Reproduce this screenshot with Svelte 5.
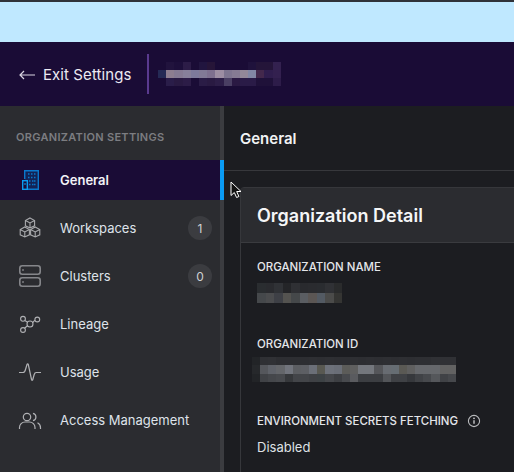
<script>
  const headerBlur = [
    ['#1a0c36','#21133d','#1d0f3a','#2c1c47','#1a0c36','#21153f','#261538','#1a0c36','#1a0c36','#1a0c36','#1a0c36','#1f123c','#241539','#241539','#33214f'],
    ['#252a55','#8d7e90','#857a93','#87809a','#7e7a9c','#827a96','#7e708f','#9d8ea3','#7e7590','#857b93','#938899','#8287a5','#43284c','#2f1d4d','#33204f'],
    ['#1a0c36','#2a1d49','#291a42','#2c1c47','#1a0c36','#2a1c46','#291a42','#2d1e48','#4a3f63','#2a1943','#2a1b47','#2a1b47','#1f1139','#1f1139','#2d1c49']
  ];
  const nameBlur = [
    ['#2a2d30','#2a2b2f','#303236','#242528','#2f3034','#292a2e','#2a2b2f','#2a2c30','#303135','#2a2b2c'],
    ['#45484b','#4b4c4e','#3e4046','#545350','#45484a','#5a5d62','#5b5654','#535a63','#4b4b4a','#353533']
  ];
  const idBlur = [
    ['#222427','#2f3034','#303135','#2d2e32','#2d2e32','#2d2e32','#2d2e32','#2e2f33','#2d2e32','#2e2f33','#2d2e32','#2d2e32','#2e2f33','#2d2e32','#2e2f33','#2d2e32','#2e2f33','#2d2e32','#2e2f33','#2d2e32','#2e2f33','#2e2f33','#303135','#303135','#303135'],
    ['#26282b','#55575c','#5f6269','#64666a','#71747c','#5c5e62','#5d5f64','#6b6f78','#585851','#6d717a','#6a6e77','#5c5c59','#5f5f5f','#74777d','#74777d','#55565a','#686c72','#666d73','#5a5954','#5f5f5f','#66686c','#66686c','#66686c','#626262','#626262'],
    ['#222427','#404246','#45474b','#484a4e','#36383b','#434549','#434549','#3f4145','#3d4245','#45474b','#3d3f43','#484a4e','#5a5b5f','#3c3e42','#3c3e42','#3c3e42','#535559','#3f4145','#3f4145','#36383c','#404246','#47494d','#55575b','#404246','#46484c']
  ];
  const items = [
    { name: 'General', active: true, icon: 'building' },
    { name: 'Workspaces', badge: 1, icon: 'cubes' },
    { name: 'Clusters', badge: 0, icon: 'servers' },
    { name: 'Lineage', icon: 'lineage' },
    { name: 'Usage', icon: 'pulse' },
    { name: 'Access Management', icon: 'users' }
  ];
</script>

{#snippet blur(rows, cls)}
  <div class="blur {cls}">
    {#each rows as row}
      <div class="blur-row">
        {#each row as c}<span style:background={c}></span>{/each}
      </div>
    {/each}
  </div>
{/snippet}

{#snippet cube(x, y)}
  <path d="M{x} {y - 5}l4.6 2.6v5.2L{x} {y + 5}l-4.6-2.2v-5.2zM{x - 4.6} {y - 2.4}L{x} {y}l4.6-2.4M{x} {y}v5" />
{/snippet}

<div class="page">
  <div class="banner"></div>
  <header class="topbar">
    <a class="exit" href="#exit">
      <svg class="arrow" viewBox="0 0 16 10" width="16" height="10" aria-hidden="true">
        <path d="M16 5H1M5 1L1 5l4 4" fill="none" stroke="#d9d6e2" stroke-width="1.2" />
      </svg>
      Exit Settings
    </a>
    <div class="divider"></div>
    {@render blur(headerBlur, 'blur-header')}
  </header>

  <div class="body">
    <aside class="sidebar">
      <div class="side-title">ORGANIZATION SETTINGS</div>
      <nav class="nav">
        {#each items as item}
          <div class="item" class:active={item.active}>
            <svg class="icon" viewBox="0 0 24 24" width="24" height="24" aria-hidden="true">
              {#if item.icon === 'building'}
                <path d="M6.7 11V2.7h13.6v18.6H9" fill="#0a4f93" fill-opacity="0.35" stroke="#0a78cc" stroke-width="1.4" />
                <rect x="4.7" y="12.7" width="4.6" height="8.6" fill="#1a0c36" stroke="#0a9cf0" stroke-width="1.4" />
                <path d="M10 6h1.5M13 6h1.5M16 6h1.5M10 9.500h1.5M13 9.500h1.500M16 9.500h1.500M11 13h1.500M14 13h1.500M16 13h1.500M11 16.500h1.500M14 16.500h1.500M16 16.500h1.500" stroke="#0a78cc" stroke-width="1.300" />
                <path d="M6.300 16h1.400" stroke="#0a9cf0" stroke-width="1.300" />
              {:else if item.icon === 'cubes'}
                <g fill="none" stroke="#a9aaad" stroke-width="1.100">
                  {@render cube(12, 7)}
                  {@render cube(6.800, 16)}
                  {@render cube(17.200, 16)}
                </g>
              {:else if item.icon === 'servers'}
                <g fill="none" stroke="#85868a" stroke-width="1.600">
                  <rect x="1.800" y="1.800" width="20.400" height="8.400" rx="2.500" />
                  <rect x="1.800" y="13.800" width="20.400" height="8.400" rx="2.500" />
                </g>
                <rect x="4" y="5" width="2" height="2" fill="#66676b" />
                <rect x="4" y="17" width="2" height="2" fill="#66676b" />
              {:else if item.icon === 'lineage'}
                <g fill="none" stroke="#b0b1b4" stroke-width="1.100">
                  <circle cx="5" cy="6.800" r="2.400" />
                  <circle cx="19.300" cy="7.500" r="2.400" />
                  <circle cx="5" cy="18" r="2.400" />
                  <circle cx="12" cy="12" r="3" />
                  <path d="M6.800 8.500l2.900 1.700M17 8.200l-2.300 2.300M6.500 16.200l3-2.400" />
                </g>
              {:else if item.icon === 'pulse'}
                <path d="M1 12.500h4c1.500 0 2-1 2.500-3L9 4.500c.3-1 1-1 1.300 0l3.200 15c.3 1 1 1 1.300 0l1.400-5c.4-1.500 1-2 2-2H23" fill="none" stroke="#b0b1b4" stroke-width="1.200" />
              {:else}
                <g fill="none" stroke="#b0b1b4" stroke-width="1.200">
                  <circle cx="9" cy="9" r="3.700" />
                  <path d="M1.500 21v-1.500a5.500 5.500 0 0 1 5.500-5.500h4.500a5.500 5.500 0 0 1 5.500 5.500V21" />
                  <path d="M15 5.300a3.800 3.800 0 0 1 0 7.400M19.500 14.800a5.500 5.500 0 0 1 3 5V21" />
                </g>
              {/if}
            </svg>
            <span class="label">{item.name}</span>
            {#if item.badge !== undefined}<span class="badge">{item.badge}</span>{/if}
          </div>
        {/each}
      </nav>
    </aside>

    <div class="scrollbar"><div class="thumb"></div></div>

    <main class="main">
      <div class="main-head">General</div>
      <section class="card">
        <h2 class="card-head">Organization Detail</h2>
        <div class="fields">
          <div class="field">
            <div class="field-label">ORGANIZATION NAME</div>
            {@render blur(nameBlur, 'blur-name')}
          </div>
          <div class="field">
            <div class="field-label">ORGANIZATION ID</div>
            {@render blur(idBlur, 'blur-id')}
          </div>
          <div class="field">
            <div class="field-label">
              ENVIRONMENT SECRETS FETCHING
              <svg class="info" viewBox="0 0 14 14" width="14" height="14" aria-hidden="true">
                <circle cx="7" cy="7" r="5.600" fill="none" stroke="#b9babd" stroke-width="1.100" />
                <path d="M7 6.300v3.500" stroke="#d5d6d8" stroke-width="1.300" />
                <circle cx="7" cy="4.400" r="0.800" fill="#d5d6d8" />
              </svg>
            </div>
            <div class="field-value">Disabled</div>
          </div>
        </div>
      </section>
    </main>
  </div>

  <svg class="cursor" viewBox="0 0 12 18" width="12" height="18" aria-hidden="true">
    <path d="M1 1v13.500l3.300-3 2.300 5 2.300-1-2.200-5h4.300z" fill="#111" stroke="#fff" stroke-width="1" />
  </svg>
</div>

<style>
  :global(body) {
    margin: 0;
    background: #1c1d21;
  }
  .page {
    position: relative;
    width: 514px;
    height: 472px;
    overflow: hidden;
    font-family: Inter, "Liberation Sans", sans-serif;
    color: #f1f2f4;
    display: flex;
    flex-direction: column;
  }
  .banner {
    height: 40px;
    flex: none;
    background: #bfe8ff;
    border-top: 2px solid #2f3239;
  }
  .topbar {
    height: 64px;
    flex: none;
    background: #1a0c36;
    display: flex;
    align-items: center;
    padding-left: 19px;
    box-sizing: border-box;
  }
  .exit {
    display: flex;
    align-items: center;
    gap: 8px;
    color: #eceaf2;
    font-size: 15px;
    letter-spacing: 0.08px;
    text-decoration: none;
    width: 128px;
    margin-top: 1px;
  }
  .arrow {
    flex: none;
  }
  .divider {
    width: 2px;
    height: 40px;
    background: #5a3a8f;
    margin-right: 9px;
  }
  .blur-row {
    display: flex;
  }
  .blur-header span {
    width: 8.200px;
    height: 8px;
  }
  .blur-name span {
    width: 8.500px;
    height: 10px;
  }
  .blur-id span {
    width: 8.160px;
    height: 8.330px;
  }
  .blur-name {
    margin-top: 8px;
  }
  .blur-id {
    margin-top: 5px;
    margin-left: -5px;
  }
  .body {
    flex: 1;
    display: flex;
    min-height: 0;
  }
  .sidebar {
    width: 220px;
    flex: none;
    background: #2b2c30;
  }
  .side-title {
    height: 54px;
    box-sizing: border-box;
    padding: 8px 16px 0;
    display: flex;
    align-items: center;
    font-size: 11px;
    font-weight: 600;
    letter-spacing: 0.3px;
    color: #7c7d81;
  }
  .nav {
    display: flex;
    flex-direction: column;
    gap: 8px;
  }
  .item {
    height: 40px;
    display: flex;
    align-items: center;
    padding: 0 8px 0 18px;
    gap: 18px;
    font-size: 13px;
    color: #dfe3ea;
  }
  .item.active {
    background: #1a0c36;
    color: #f3f3f7;
    font-weight: 600;
  }
  .icon {
    flex: none;
  }
  .label {
    flex: 1;
  }
  .badge {
    width: 24px;
    height: 24px;
    border-radius: 50%;
    background: #3b3c40;
    color: #cfd1d4;
    font-size: 12px;
    display: flex;
    align-items: center;
    justify-content: center;
  }
  .scrollbar {
    width: 4px;
    flex: none;
    background: #3b3c40;
  }
  .thumb {
    height: 40px;
    margin-top: 54px;
    background: #0a9cf5;
  }
  .main {
    flex: 1;
    min-width: 0;
    background: #1c1d21;
  }
  .main-head {
    height: 65px;
    box-sizing: border-box;
    border-bottom: 1px solid #37383c;
    padding: 0 16px;
    display: flex;
    align-items: center;
    font-size: 15px;
    font-weight: 600;
    color: #f1f2f4;
  }
  .card {
    margin: 16px -20px 0 16px;
    border: 1px solid #36373b;
    border-radius: 4px 0 0 0;
    background: #1c1d21;
  }
  .card-head {
    margin: 0;
    height: 55px;
    box-sizing: border-box;
    background: #2b2c30;
    border-bottom: 1px solid #3a3b3f;
    padding: 0 16px;
    display: flex;
    align-items: center;
    font-size: 18px;
    font-weight: 600;
    color: #f5f6f7;
  }
  .fields {
    padding: 16px 16px 0;
    display: grid;
    grid-auto-rows: 77px;
  }
  .field-label {
    font-size: 11.45px;
    font-weight: 500;
    line-height: 16px;
    color: #e4e6ea;
    display: flex;
    align-items: center;
    gap: 9px;
  }
  .field-value {
    margin-top: 10px;
    font-size: 13px;
    line-height: 16px;
    color: #dfe1e5;
  }
  .cursor {
    position: absolute;
    left: 230px;
    top: 181px;
  }
</style>
